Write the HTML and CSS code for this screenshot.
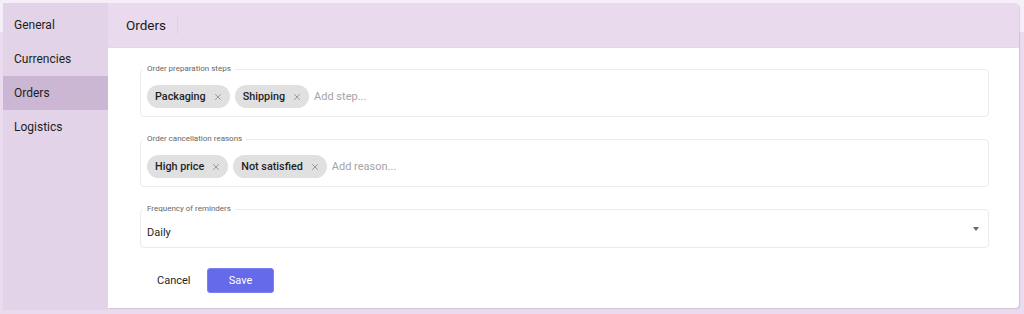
FILE: index.html
```html
<!DOCTYPE html>
<html>
<head>
<meta charset="utf-8">
<link rel="stylesheet" href="styles.css">
</head>
<body>
<div class="layout">
  <nav class="sidebar">
    <div class="nav-item">General</div>
    <div class="nav-item">Currencies</div>
    <div class="nav-item active">Orders</div>
    <div class="nav-item">Logistics</div>
  </nav>
  <main class="card">
    <header class="card-header">
      <div class="title">Orders</div>
    </header>
    <div class="card-body">
      <fieldset class="field">
        <legend>Order preparation steps</legend>
        <div class="chips">
          <span class="chip">Packaging<svg class="x" viewBox="0 0 10 10"><path d="M1.5 1.5L8.5 8.5M8.5 1.5L1.5 8.5"/></svg></span>
          <span class="chip">Shipping<svg class="x" viewBox="0 0 10 10"><path d="M1.5 1.5L8.5 8.5M8.5 1.5L1.5 8.5"/></svg></span>
          <span class="placeholder">Add step...</span>
        </div>
      </fieldset>
      <fieldset class="field">
        <legend>Order cancellation reasons</legend>
        <div class="chips">
          <span class="chip">High price<svg class="x" viewBox="0 0 10 10"><path d="M1.5 1.5L8.5 8.5M8.5 1.5L1.5 8.5"/></svg></span>
          <span class="chip">Not satisfied<svg class="x" viewBox="0 0 10 10"><path d="M1.5 1.5L8.5 8.5M8.5 1.5L1.5 8.5"/></svg></span>
          <span class="placeholder">Add reason...</span>
        </div>
      </fieldset>
      <fieldset class="field select">
        <legend>Frequency of reminders</legend>
        <div class="select-row">
          <span>Daily</span>
          <span class="caret"></span>
        </div>
      </fieldset>
      <div class="actions">
        <button class="btn-text">Cancel</button>
        <button class="btn-primary">Save</button>
      </div>
    </div>
  </main>
</div>
</body>
</html>
```

FILE: styles.css
```css
html, body {
  margin: 0;
  height: 314px;
  overflow: hidden;
}
body {
  font-family: Roboto, "Noto Sans", sans-serif;
  background: linear-gradient(to bottom, #f6eff9 0, #f6eff9 32px, #ebdbef 32px);
  color: #1d1d1d;
}
.layout {
  display: flex;
  align-items: flex-start;
  padding: 3px 5px 0 3px;
}
.sidebar {
  width: 105px;
  height: 307px;
  background: #e2d3e8;
  padding-top: 5px;
  box-sizing: border-box;
  flex: none;
}
.nav-item {
  height: 34px;
  line-height: 34px;
  padding-left: 11px;
  font-size: 12px;
  color: #1e1e1e;
}
.nav-item.active {
  background: #cbb7d3;
}
.card {
  flex: 1;
  height: 305px;
  background: #fff;
  border-radius: 0 4px 4px 0;
  box-shadow: 1px 1px 1px rgba(0, 0, 0, 0.12);
  overflow: hidden;
}
.card-header {
  height: 45px;
  background: #e9daee;
  display: flex;
  align-items: center;
  padding-left: 18px;
  border-bottom: 1px solid #e5d5ea;
  box-sizing: border-box;
}
.title {
  font-size: 13.5px;
  line-height: 18px;
  padding-right: 11px;
  border-right: 1px solid #e1d1e6;
  color: #1a1a1a;
}
.card-body {
  padding: 16px 30px 16px 32px;
}
.field {
  margin: 0 0 17px 0;
  padding: 11px 6px 8px 6px;
  border: 1px solid #ebebeb;
  border-radius: 4px;
  min-width: 0;
}
.field legend {
  font-size: 8px;
  line-height: 10px;
  color: #666;
  padding: 0 4px;
  margin-left: -4px;
}
.chips {
  display: flex;
  align-items: center;
  height: 23px;
}
.chip {
  display: inline-flex;
  align-items: center;
  height: 23px;
  padding: 0 8px 0 8px;
  gap: 8px;
  background: #e0e0e0;
  border-radius: 12px;
  font-size: 10.8px;
  font-weight: 500;
  color: #1f1f1f;
  margin-right: 5px;
}
.x {
  width: 8px;
  height: 8px;
  stroke: #8f8f8f;
  stroke-width: 1.1;
  fill: none;
}
.placeholder {
  font-size: 11px;
  color: #a4a4a4;
}
.field.select {
  padding: 10px 9px 7px 6px;
  margin-bottom: 0;
}
.select-row {
  display: flex;
  align-items: center;
  justify-content: space-between;
  height: 16px;
  font-size: 11px;
  color: #1f1f1f;
}
.caret {
  width: 0;
  height: 0;
  border-left: 3.5px solid transparent;
  border-right: 3.5px solid transparent;
  border-top: 4px solid #666;
  margin-top: -6px;
}
.actions {
  display: flex;
  align-items: center;
  margin-top: 20px;
}
.btn-text {
  font-family: inherit;
  font-size: 11px;
  background: none;
  border: none;
  width: 67px;
  text-align: left;
  padding: 0 0 0 17px;
  height: 25px;
  color: #1f1f1f;
}
.btn-primary {
  font-family: inherit;
  font-size: 11px;
  width: 67px;
  height: 25px;
  background: #646aea;
  color: #fff;
  border: 1px solid #7c80ef;
  border-radius: 3px;
  padding: 0;
}
```
